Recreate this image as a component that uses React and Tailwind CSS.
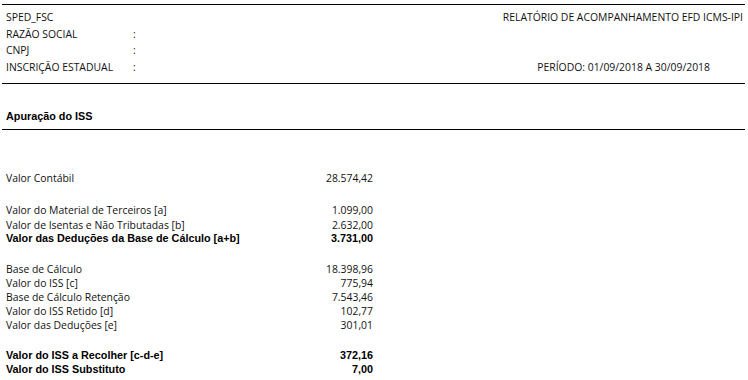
import React from 'react';

const regular = "font-['Open_Sans',sans-serif] text-[10.4px] text-[#111]";
const strong = "font-['Liberation_Sans',sans-serif] font-bold text-[10.8px] text-black";

function Row({ label, value, bold, className }) {
    return (
        <div className={`flex justify-between items-center w-[374px] pl-[6px] pr-[1px] ${className || ''}`}>
            <span className={bold ? strong : regular}>{label}</span>
            <span className={bold ? strong : regular}>{value}</span>
        </div>
    );
}

function HeaderRow({ left, colon, right, rightClass }) {
    return (
        <div className="flex items-center h-[16.5px]">
            <span className="w-[133px] pl-[6px]">{left}</span>
            <span className="w-[20px]">{colon ? ':' : ''}</span>
            <span className={`flex-1 text-right ${rightClass || ''}`}>{right}</span>
        </div>
    );
}

function Rule() {
    return (
        <div className="pl-[2px] pr-[3px]">
            <div className="border-t border-black"></div>
        </div>
    );
}

export default function App() {
    return (
        <div className={`w-[748px] h-[380px] bg-white overflow-hidden ${regular}`}>
            <div className="h-[4px]"></div>
            <Rule />

            {/* cabeçalho */}
            <div className="pt-[5px] h-[78px]">
                <HeaderRow left="SPED_FSC" right="RELATÓRIO DE ACOMPANHAMENTO EFD ICMS-IPI" rightClass="pr-[5px]" />
                <HeaderRow left="RAZÃO SOCIAL" colon />
                <HeaderRow left="CNPJ" colon />
                <HeaderRow left="INSCRIÇÃO ESTADUAL" colon right="PERÍODO: 01/09/2018 A 30/09/2018" rightClass="pr-[38px]" />
            </div>
            <Rule />

            <div className="h-[45px] pl-[6px] pt-[24px]">
                <span className={strong}>Apuração do ISS</span>
            </div>
            <Rule />

            {/* valores */}
            <div className="flex flex-col">
                <Row label="Valor Contábil" value="28.574,42" className="h-[14px] mt-[42px]" />

                <Row label="Valor do Material de Terceiros [a]" value="1.099,00" className="h-[14px] mt-[18px]" />
                <Row label="Valor de Isentas e Não Tributadas [b]" value="2.632,00" className="h-[14px] mt-[1px]" />
                <Row label="Valor das Deduções da Base de Cálculo [a+b]" value="3.731,00" bold className="h-[11px]" />

                <Row label="Base de Cálculo" value="18.398,96" className="h-[14px] mt-[19px]" />
                <Row label="Valor do ISS [c]" value="775,94" className="h-[14px]" />
                <Row label="Base de Cálculo Retenção" value="7.543,46" className="h-[14px]" />
                <Row label="Valor do ISS Retido [d]" value="102,77" className="h-[14px]" />
                <Row label="Valor das Deduções [e]" value="301,01" className="h-[14px]" />

                <Row label="Valor do ISS a Recolher [c-d-e]" value="372,16" bold className="h-[14px] mt-[15px]" />
                <Row label="Valor do ISS Substituto" value="7,00" bold className="h-[14px]" />
            </div>
        </div>
    );
}
